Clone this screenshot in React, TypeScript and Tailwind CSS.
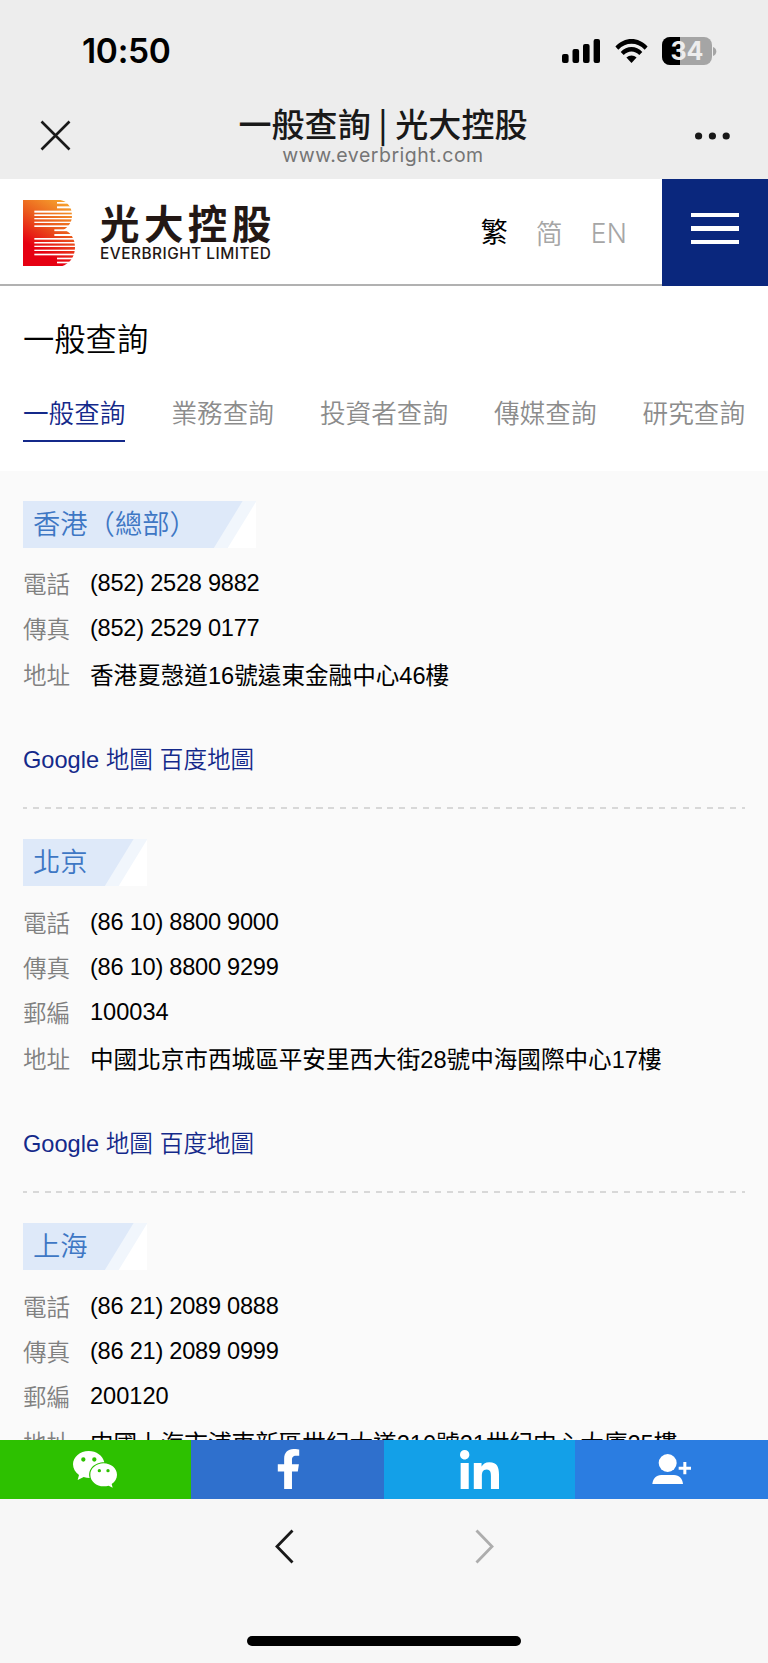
import { FaFacebookF, FaLinkedinIn } from "react-icons/fa";

const tabs = ["一般查詢", "業務查詢", "投資者查詢", "傳媒查詢", "研究查詢"];

const offices = [
  {
    city: "香港（總部）",
    rows: [
      ["電話", "(852) 2528 9882"],
      ["傳真", "(852) 2529 0177"],
      ["地址", "香港夏愨道16號遠東金融中心46樓"],
    ],
  },
  {
    city: "北京",
    rows: [
      ["電話", "(86 10) 8800 9000"],
      ["傳真", "(86 10) 8800 9299"],
      ["郵編", "100034"],
      ["地址", "中國北京市西城區平安里西大街28號中海國際中心17樓"],
    ],
  },
  {
    city: "上海",
    rows: [
      ["電話", "(86 21) 2089 0888"],
      ["傳真", "(86 21) 2089 0999"],
      ["郵編", "200120"],
      ["地址", "中國上海市浦東新區世紀大道210號21世紀中心大廈25樓"],
    ],
  },
];

// [x, y, height] of the white cuts in the B mark
const cuts = [
  [102, 6, 5],
  [102, 19, 6],
  [34, 32, 6],
  [34, 43, 5],
  [34, 54, 4],
  [34, 65, 4],
  [34, 76, 5],
  [94, 88, 5.5],
  [94, 102, 6],
  [34, 114, 5],
  [34, 126, 4.5],
  [34, 137, 4],
  [34, 149, 4],
  [34, 161, 5],
  [102, 173, 5],
  [102, 185, 5],
];

function StatusBar() {
  return (
    <div className="h-[102px] flex justify-between pl-[82px] pr-[51px] pt-[31px]">
      <span className="font-['Inter'] text-[33.5px] leading-[41px] font-semibold tracking-[-0.3px] text-black">10:50</span>
      <div className="flex items-start">
        <svg width="38" height="24" viewBox="0 0 38 24" className="mt-2">
          <rect x="0" y="15" width="6.6" height="9" rx="2" />
          <rect x="10.5" y="10" width="6.6" height="14" rx="2" />
          <rect x="21" y="5" width="6.6" height="19" rx="2" />
          <rect x="31.6" y="0" width="6.4" height="24" rx="2" />
        </svg>
        <svg width="33" height="24" viewBox="0 0 33 24" className="mt-2 ml-[15px]">
          <path d="M0.4 7.6C9.5-2.4 23.5-2.4 32.6 7.6L29.7 10.7C22.3 2.8 10.7 2.8 3.3 10.7Z" />
          <path d="M5.7 13C11.8 6.4 21.2 6.4 27.3 13L24.3 16.1C19.8 11.4 13.2 11.4 8.7 16.1Z" />
          <path d="M11.4 18.6C14.4 15.9 18.6 15.9 21.6 18.6L16.5 24Z" />
        </svg>
        <div className="relative ml-[14px] mt-[6px] h-[28px] w-[50px] rounded-[8px] overflow-hidden bg-[#a5a5a5]">
          <div className="h-full w-[18px] bg-black" />
          <span className="absolute inset-0 text-center font-['Inter'] text-[25px] leading-[28px] font-bold text-[#ededed]">34</span>
        </div>
        <svg width="4" height="9" viewBox="0 0 4 9" className="mt-[16px] ml-px" fill="#a5a5a5">
          <path d="M0 0C4.4 1.4 4.4 7.6 0 9Z" />
        </svg>
      </div>
    </div>
  );
}

function BrowserBar() {
  return (
    <div className="h-[77px] flex justify-between px-10">
      <svg width="31" height="31" viewBox="0 0 31 31" className="mt-[18px]" stroke="#191919" strokeWidth="2.6">
        <path d="M1.5 1.5L29.5 29.5M29.5 1.5L1.5 29.5" />
      </svg>
      <div className="flex flex-col items-center">
        <h1 className="text-[33px] leading-[36px] font-medium text-[#191919] whitespace-nowrap mt-[3px] tracking-[0.1px] font-['Noto_Sans_CJK_TC',sans-serif]">
          一般查詢 | 光大控股
        </h1>
        <p className="font-['Inter'] text-[19.5px] leading-[24px] mt-[2px] text-[#757575] tracking-[0.5px]">www.everbright.com</p>
      </div>
      <svg width="35" height="8" viewBox="0 0 35 8" className="mt-[30px] -mr-[2px]" fill="#191919">
        <circle cx="3.6" cy="4" r="3.6" />
        <circle cx="17.4" cy="4" r="3.6" />
        <circle cx="31.2" cy="4" r="3.6" />
      </svg>
    </div>
  );
}

function Logo() {
  return (
    <div className="flex items-start">
      <svg width="52" height="66" viewBox="0 0 156 198" className="mt-[0.5px]">
        <defs>
          <linearGradient id="mark" x1="0.75" y1="0" x2="0.3" y2="1">
            <stop offset="0" stopColor="#f6a22d" />
            <stop offset="0.4" stopColor="#ea5a1d" />
            <stop offset="0.8" stopColor="#e60012" />
          </linearGradient>
        </defs>
        <path
          d="M0 0H112C134 4 147 22 147 46C147 66 138 80 122 89C144 96 156 116 156 142C156 168 142 190 118 198H0Z"
          fill="url(#mark)"
        />
        {cuts.map(([x, y, h]) => (
          <rect key={y} x={x} y={y} width={160 - x} height={h} fill="#fff" />
        ))}
      </svg>
      <div className="ml-[25px] text-[#231815] whitespace-nowrap">
        <p className="text-[39.5px] leading-[40px] font-bold tracking-[4.4px] mt-[6px]">光大控股</p>
        <p className="font-['Inter'] text-[15.4px] leading-[18px] font-medium tracking-[0.5px]">EVERBRIGHT LIMITED</p>
      </div>
    </div>
  );
}

function Header() {
  return (
    <header className="h-[107px] flex bg-white">
      <div className="flex-1 flex justify-between border-b-2 border-[#b1b1b1] pl-[23px] pr-[35px] pt-5">
        <Logo />
        <div className="flex gap-[28px] text-[27px] leading-[40px] pt-[14px] text-[#a6a6a6]">
          <span className="text-black">繁</span>
          <span className="font-['Noto_Sans_CJK_SC'] font-[350]">简</span>
          <span className="font-['Inter'] font-light text-[26.5px] tracking-[0.2px]">EN</span>
        </div>
      </div>
      <button className="w-[106px] bg-[#0a277d] flex flex-col items-center gap-[9.5px] pt-[33.5px]">
        <span className="h-[4.3px] w-[48px] bg-white" />
        <span className="h-[4.3px] w-[48px] bg-white" />
        <span className="h-[4.3px] w-[48px] bg-white" />
      </button>
    </header>
  );
}

function CityLabel({ name }: { name: string }) {
  return (
    <div className="flex w-fit h-[47px] bg-[#dee9f9]">
      <h3 className="pl-[10px] text-[27.3px] leading-[48px] text-[#3e77c4] font-[350]">{name}</h3>
      <svg width="59.5" height="47" viewBox="0 0 60 47" preserveAspectRatio="none">
        <path d="M46 0H60V47H17Z" fill="#f1f6fc" />
        <path d="M60 0V47H31Z" fill="#fff" />
      </svg>
    </div>
  );
}

function Office({ city, rows }: { city: string; rows: string[][] }) {
  return (
    <section className="shrink-0">
      <CityLabel name={city} />
      <dl className="pt-[15px]">
        {rows.map(([label, value]) => (
          <div key={label} className="flex h-[45.4px] text-[23.6px] leading-[45px]">
            <dt className="w-[67px] pt-[0.5px] text-[#808080] font-[350]">{label}</dt>
            <dd
              className={
                value.startsWith("(")
                  ? "text-black tracking-[-0.25px] -mt-[1.5px]"
                  : /^\d+$/.test(value)
                    ? "text-black -mt-[1.5px]"
                    : "text-black pt-[0.5px]"
              }
            >
              {value}
            </dd>
          </div>
        ))}
      </dl>
      <div className="mt-[39px] h-[45px] flex gap-[7px] text-[23.6px] leading-[45px] text-[#14298a] font-[350]">
        <a href="#">Google 地圖</a>
        <a href="#">百度地圖</a>
      </div>
      <div className="mt-[24.4px] mb-[30px] h-[2px] bg-[repeating-linear-gradient(90deg,#d8d8d8_0_6px,transparent_6px_11.82px)] bg-[position:-2px_0]" />
    </section>
  );
}

function WeChatIcon() {
  return (
    <svg width="45" height="37" viewBox="0 0 135 111" fill="#fff">
      <path
        fillRule="evenodd"
        d="M47 0C21 0 0 18 0 40C0 53 7 64 18 72L14 87L32 78C38 80 44 81 50 81C43 55 64 34 94 34C90 14 70 0 47 0ZM31 19a6.5 6.5 0 1 1 0 13a6.5 6.5 0 1 1 0-13ZM64 19a6.5 6.5 0 1 1 0 13a6.5 6.5 0 1 1 0-13Z"
      />
      <path
        fillRule="evenodd"
        d="M92 37C69 37 52 53 52 71C52 91 70 106 92 106C97 106 102 105 107 104L119 110L116 99C126 92 132 82 132 71C132 52 114 37 92 37ZM79 54a5 5 0 1 1 0 10a5 5 0 1 1 0-10ZM105 54a5 5 0 1 1 0 10a5 5 0 1 1 0-10Z"
      />
    </svg>
  );
}

function ShareBar() {
  return (
    <div className="h-[58.5px] shrink-0 flex">
      <a href="#" className="w-[191px] flex justify-center pt-[10.5px] bg-[#2dc100]">
        <WeChatIcon />
      </a>
      <a href="#" className="w-[193px] flex justify-center pt-[9px] pl-[2px] bg-[#2f70cd] text-white">
        <FaFacebookF className="w-[25px] h-[40px]" preserveAspectRatio="none" />
      </a>
      <a href="#" className="w-[191px] flex justify-center pt-[9.5px] bg-[#13a0e8] text-white">
        <FaLinkedinIn className="w-[39px] h-[44.6px]" preserveAspectRatio="none" />
      </a>
      <a href="#" className="flex-1 flex justify-center pt-[14px] bg-[#2b7de1]">
        <svg width="40" height="31" viewBox="0 0 120 93" fill="#fff">
          <circle cx="47" cy="27" r="27" />
          <path d="M1 90C3 74 12 63 28 63H66C82 63 91 74 93 90Z" />
          <path d="M94 24H103V38H117V47H103V61H94V47H80V38H94Z" />
        </svg>
      </a>
    </div>
  );
}

function BottomNav() {
  return (
    <div className="flex-1 bg-[#f7f7f7] flex flex-col items-center justify-between pt-[30.5px] pb-[17px]">
      <div className="flex gap-[181px]">
        <svg width="19" height="35" viewBox="0 0 19 35" fill="none" stroke="#191919" strokeWidth="2.8">
          <path d="M17.5 1.5L2 17.5L17.5 33.5" />
        </svg>
        <svg width="19" height="35" viewBox="0 0 19 35" fill="none" stroke="#adadad" strokeWidth="2.8">
          <path d="M1.5 1.5L17 17.5L1.5 33.5" />
        </svg>
      </div>
      <div className="h-[10px] w-[274px] rounded-full bg-black" />
    </div>
  );
}

export default function App() {
  return (
    <div className="w-[768px] h-[1663px] flex flex-col overflow-hidden bg-[#ededed] font-['Liberation_Sans','Noto_Sans_CJK_TC',sans-serif]">
      <StatusBar />
      <BrowserBar />
      <Header />

      <div className="h-[185px] shrink-0 bg-white px-[23px] pt-[34px]">
        <h2 className="text-[31.3px] leading-[42px] text-black font-[350]">一般查詢</h2>
        <nav className="mt-[31px] flex justify-between text-[25.6px] leading-[42px] text-[#8c8c8c] font-[350]">
          {tabs.map((tab, i) => (
            <a
              key={tab}
              href="#"
              className={i === 0 ? "h-[49px] text-[#14298a] border-b-2 border-[#14298a]" : "h-[49px]"}
            >
              {tab}
            </a>
          ))}
        </nav>
      </div>

      <main className="h-[969px] shrink-0 overflow-hidden bg-[#fafafa] px-[23px] pt-[29.5px] flex flex-col">
        {offices.map((office) => (
          <Office key={office.city} {...office} />
        ))}
      </main>

      <ShareBar />
      <BottomNav />
    </div>
  );
}
